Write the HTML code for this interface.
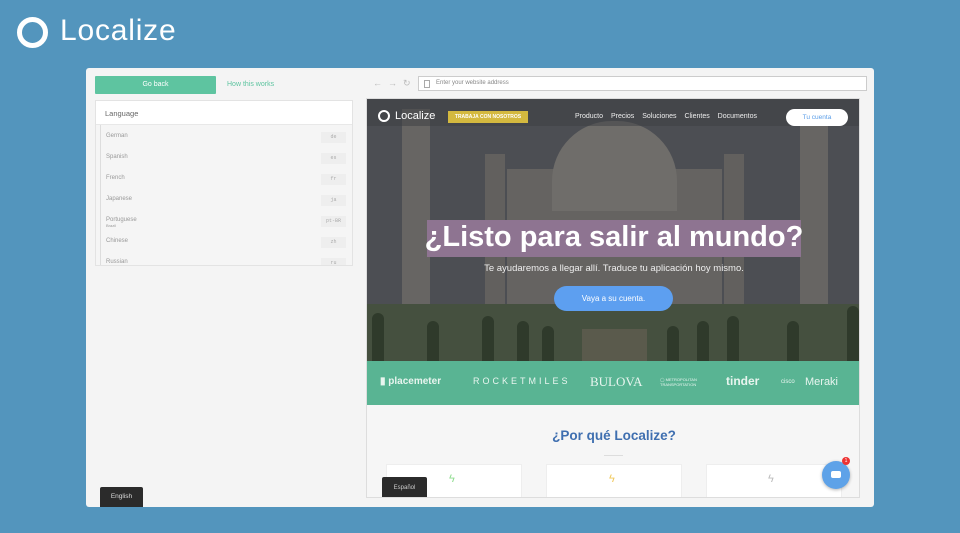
<!DOCTYPE html>
<html><head><meta charset="utf-8"><style>
*{box-sizing:border-box;margin:0;padding:0}
body{width:960px;height:533px;background:#5395bd;font-family:"Liberation Sans",sans-serif;position:relative;overflow:hidden}
.abs{position:absolute}
.logo{left:17px;top:17px;width:31px;height:31px;border:5px solid #fff;border-radius:50%}
.logot{left:60px;top:14px;color:#fff;font-size:30px;letter-spacing:0.8px}
.card{left:86px;top:68px;width:788px;height:439px;background:#f4f4f4;border-radius:3px}
.goback{left:95px;top:76px;width:121px;height:18px;background:#5ec4a0;color:#fff;font-size:7px;text-align:center;line-height:18px;border-radius:1px}
.how{left:227px;top:81px;color:#5ec4a0;font-size:7px}
.panel{left:95px;top:100px;width:258px;height:166px;border:1px solid #e3e3e3;background:#f5f5f5;overflow:hidden}
.ph{height:24px;background:#fff;border-bottom:1px solid #e8e8e8;font-size:7.5px;color:#666;padding:8px 9px}
.row{position:relative;height:21px;margin-left:4px;border-left:1px solid #ddd;padding-left:5px;padding-top:8px;font-size:6px;color:#999}
.code{position:absolute;right:6px;top:7px;width:25px;height:11px;background:#eee;font-family:"Liberation Mono",monospace;font-size:5px;color:#aaa;text-align:center;line-height:11px}
.eng{left:100px;top:487px;width:43px;height:20px;background:#2b2b2b;color:#ddd;font-size:6.5px;text-align:center;line-height:20px;border-radius:2px 2px 0 0}
.url{left:418px;top:76px;width:449px;height:15px;border:1px solid #ccc;background:#fff;font-size:6px;color:#888;padding:3px 0 0 17px}
.nav{top:78px;color:#bbb;font-size:9px}
.site{left:366px;top:98px;width:494px;height:400px;border:1px solid #ddd;overflow:hidden;background:#f6f6f6}
.hero{left:0;top:0;width:494px;height:262px;background:#4c4e53;overflow:hidden}
.green{left:0;top:262px;width:494px;height:44px;background:#59b493}
.gl{top:277px;color:#e8f5ef;font-size:11px}
.tree{position:absolute;bottom:0;width:12px;border-radius:6px 6px 0 0;background:#2f3a2b}
</style></head><body>
<div class="abs logo"></div><div class="abs logot">Localize</div>
<div class="abs card"></div>
<div class="abs goback">Go back</div><div class="abs how">How this works</div>
<div class="abs panel"><div class="ph">Language</div>
<div class="row">German<div class="code">de</div></div>
<div class="row">Spanish<div class="code">es</div></div>
<div class="row">French<div class="code">fr</div></div>
<div class="row">Japanese<div class="code">ja</div></div>
<div class="row">Portuguese<div style="font-size:4px">Brazil</div><div class="code">pt-BR</div></div>
<div class="row">Chinese<div class="code">zh</div></div>
<div class="row">Russian<div class="code">ru</div></div>
</div>
<div class="abs eng">English</div>
<div class="abs nav" style="left:373px">&#8592;</div><div class="abs nav" style="left:388px">&#8594;</div><div class="abs nav" style="left:403px">&#8635;</div>
<div class="abs url">Enter your website address<div style="position:absolute;left:5px;top:3px;width:6px;height:8px;border:1px solid #aaa"></div></div>
<div class="abs site">
 <div class="abs hero">
  <div class="abs" style="left:140px;top:70px;width:215px;height:150px;background:#656361"></div>
  <div class="abs" style="left:185px;top:22px;width:125px;height:90px;border-radius:60px 60px 0 0;background:#6f6d6a"></div>
  <div class="abs" style="left:35px;top:10px;width:28px;height:220px;background:#676563"></div>
  <div class="abs" style="left:433px;top:10px;width:28px;height:220px;background:#676563"></div>
  <div class="abs" style="left:118px;top:55px;width:20px;height:160px;background:#62605e"></div>
  <div class="abs" style="left:357px;top:55px;width:20px;height:160px;background:#62605e"></div>
  <div class="abs" style="left:0;top:205px;width:494px;height:57px;background:#45503f"></div>
  <div class="abs" style="left:215px;top:230px;width:65px;height:32px;background:#5a5a4c"></div>
  <div class="tree" style="left:5px;height:48px"></div><div class="tree" style="left:60px;height:40px"></div>
  <div class="tree" style="left:115px;height:45px"></div><div class="tree" style="left:150px;height:40px"></div>
  <div class="tree" style="left:175px;height:35px"></div><div class="tree" style="left:300px;height:35px"></div>
  <div class="tree" style="left:330px;height:40px"></div><div class="tree" style="left:360px;height:45px"></div>
  <div class="tree" style="left:420px;height:40px"></div><div class="tree" style="left:480px;height:55px"></div>
  <div class="abs" style="left:0;top:0;width:494px;height:27px;background:rgba(60,62,66,.5)"></div>
  <div class="abs" style="left:11px;top:11px;width:12px;height:12px;border:2px solid #fff;border-radius:50%"></div>
  <div class="abs" style="left:28px;top:11px;color:#fff;font-size:11px">Localize</div>
  <div class="abs" style="left:81px;top:12px;width:80px;height:12px;background:#d4b93f;color:#fff;font-size:5px;font-weight:bold;line-height:12px;text-align:center">TRABAJA CON NOSOTROS</div>
  <div class="abs" style="left:208px;top:14px;color:#eee;font-size:7px;word-spacing:6px">Producto Precios Soluciones Clientes Documentos</div>
  <div class="abs" style="left:419px;top:10px;width:62px;height:17px;background:#fff;border-radius:9px;color:#5b9ee8;font-size:6.5px;text-align:center;line-height:17px">Tu cuenta</div>
  <div class="abs" style="left:60px;top:121px;width:374px;height:37px;background:#8e7491"></div>
  <div class="abs" style="left:0;top:122px;width:494px;text-align:center;color:#fff;font-size:29px;font-weight:bold">¿Listo para salir al mundo?</div>
  <div class="abs" style="left:0;top:164px;width:494px;text-align:center;color:#eee;font-size:9.5px">Te ayudaremos a llegar allí. Traduce tu aplicación hoy mismo.</div>
  <div class="abs" style="left:187px;top:187px;width:119px;height:25px;background:#5d9ff0;border-radius:13px;color:#fff;font-size:8px;text-align:center;line-height:25px">Vaya a su cuenta.</div>
 </div>
 <div class="abs green"></div>
 <div class="abs gl" style="left:13px;font-weight:bold;font-size:10px">▮ placemeter</div>
 <div class="abs gl" style="left:106px;font-size:9px;letter-spacing:3px">ROCKETMILES</div>
 <div class="abs gl" style="left:223px;font-family:'Liberation Serif',serif;font-size:13px;top:275px">BULOVA</div>
 <div class="abs gl" style="left:293px;font-size:4px;top:278px">◯ METROPOLITAN<br>TRANSPORTATION</div>
 <div class="abs gl" style="left:359px;font-weight:bold;font-size:12px;top:275px">tinder</div>
 <div class="abs gl" style="left:414px;font-size:6px;top:280px">cisco</div>
 <div class="abs gl" style="left:438px;font-size:11px;top:277px">Meraki</div>
 <div class="abs" style="left:0;top:329px;width:494px;text-align:center;color:#3f6fb0;font-size:13.5px;font-weight:bold">¿Por qué Localize?</div>
 <div class="abs" style="left:237px;top:356px;width:19px;height:1px;background:#ddd"></div>
 <div class="abs" style="left:19px;top:365px;width:136px;height:40px;background:#fff;border:1px solid #eee"></div>
 <div class="abs" style="left:179px;top:365px;width:136px;height:40px;background:#fff;border:1px solid #eee"></div>
 <div class="abs" style="left:339px;top:365px;width:136px;height:40px;background:#fff;border:1px solid #eee"></div>
 <div class="abs" style="left:82px;top:374px;color:#8fdc8f;font-size:11px">ϟ</div>
 <div class="abs" style="left:242px;top:374px;color:#f0c85a;font-size:11px">ϟ</div>
 <div class="abs" style="left:401px;top:374px;color:#bbb;font-size:11px">ϟ</div>
 <div class="abs" style="left:455px;top:362px;width:28px;height:28px;border-radius:50%;background:#5ea2e8;box-shadow:0 1px 3px rgba(0,0,0,.3)"></div>
 <div class="abs" style="left:464px;top:372px;width:10px;height:7px;border-radius:2px;background:#fff"></div>
 <div class="abs" style="left:475px;top:358px;width:8px;height:8px;border-radius:50%;background:#e33;color:#fff;font-size:5px;text-align:center;line-height:8px">1</div>
 <div class="abs" style="left:15px;top:378px;width:45px;height:22px;background:#2b2b2b;color:#ccc;font-size:6px;text-align:center;line-height:22px;border-radius:2px 2px 0 0">Español</div>
</div>
</body></html>
